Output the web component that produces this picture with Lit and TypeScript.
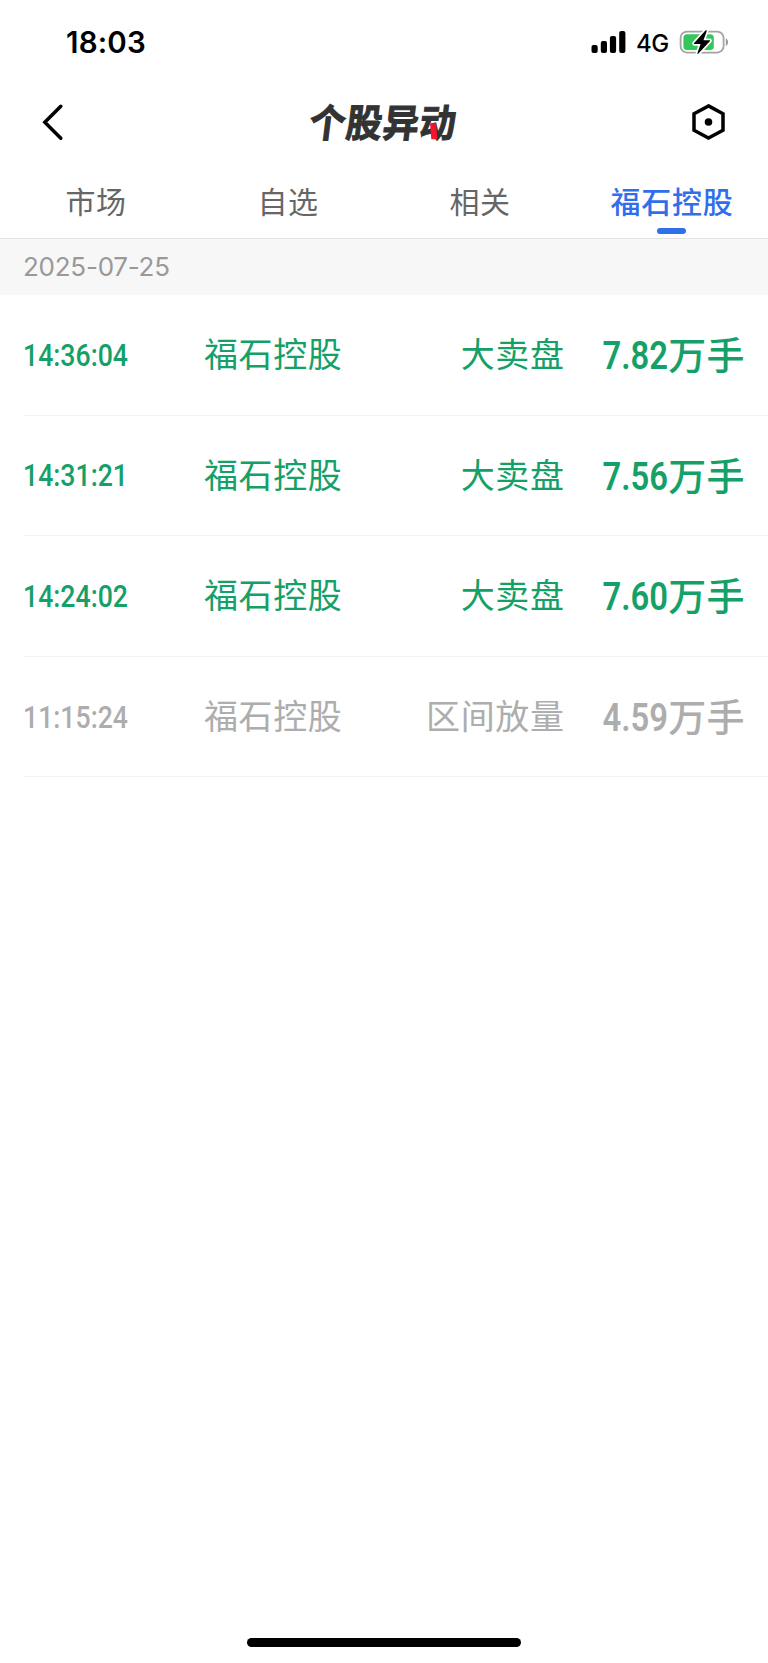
import { LitElement, html, css } from "lit";
import { customElement, property } from "lit/decorators.js";

interface Movement {
  time: string;
  name: string;
  kind: string;
  amount: string;
  unit: string;
  muted?: boolean;
}

const MOVEMENTS: Movement[] = [
  { time: "14:36:04", name: "福石控股", kind: "大卖盘", amount: "7.82", unit: "万手" },
  { time: "14:31:21", name: "福石控股", kind: "大卖盘", amount: "7.56", unit: "万手" },
  { time: "14:24:02", name: "福石控股", kind: "大卖盘", amount: "7.60", unit: "万手" },
  { time: "11:15:24", name: "福石控股", kind: "区间放量", amount: "4.59", unit: "万手", muted: true },
];

@customElement("status-bar")
class StatusBar extends LitElement {
  static styles = css`
    :host {
      display: flex;
      justify-content: space-between;
      height: 85px;
      padding: 0 38px 0 66px;
      box-sizing: border-box;
      font-family: Inter, sans-serif;
      color: #000;
    }
    .clock {
      font-size: 29.5px;
      font-weight: 600;
      line-height: 36px;
      padding-top: 24px;
      letter-spacing: 0.2px;
    }
    .right {
      display: flex;
      align-items: flex-start;
      padding-top: 29px;
    }
    .net {
      font-size: 24px;
      font-weight: 450;
      line-height: 28px;
      padding: 1px 0 0 10px;
      width: 33px;
      letter-spacing: -0.5px;
      margin-right: 10px;
    }
    svg {
      display: block;
    }
  `;
  render() {
    return html`
      <div class="clock">18:03</div>
      <div class="right">
        <svg width="35" height="26" viewBox="0 0 35 26">
          <rect x="0.5" y="16" width="6.2" height="8" rx="2" />
          <rect x="9.8" y="12" width="6.2" height="12" rx="2" />
          <rect x="18.9" y="7" width="6.2" height="17" rx="2" />
          <rect x="28.2" y="2" width="6.2" height="22" rx="2" />
        </svg>
        <span class="net">4G</span>
        <svg width="51" height="26" viewBox="0 0 51 26">
          <rect x="1.6" y="2.6" width="43" height="21" rx="6.4" fill="none" stroke="#a3a3a3" stroke-width="1.8" />
          <path d="M46.8 9.2c3 1.600 3 6.200 0 7.800z" fill="#999" />
          <rect x="4.4" y="5.3" width="30.4" height="15.8" rx="3.6" fill="#34c759" />
          <path
            d="M26.400 1.600 15 14.200c-.3.400 0 .8.400.8h6.200l-3.200 8.900c-.3.900.5 1.200 1.100.6L31 12c.3-.4.1-.8-.4-.8h-6.100l3.200-8.900c.2-.9-.7-1.300-1.300-.7z"
            fill="#000" stroke="#fff" stroke-width="3.4" paint-order="stroke"
          />
        </svg>
      </div>
    `;
  }
}

@customElement("nav-header")
class NavHeader extends LitElement {
  static styles = css`
    :host {
      display: grid;
      grid-template-columns: 1fr auto 1fr;
      align-items: center;
      height: 73px;
      padding: 0 42px 2px;
    }
    svg {
      display: block;
    }
    .end {
      justify-self: end;
    }
    .logo {
      position: relative;
      margin: 0;
      font: 700 36px/50px "Noto Sans CJK SC", sans-serif;
      letter-spacing: 0.8px;
      color: #333;
      -webkit-text-stroke: 1px #333;
      transform: translateY(-2px) skewX(-7deg) scaleY(1.07);
    }
    .accent {
      position: absolute;
      left: 122px;
      top: 28px;
      width: 6px;
      height: 14.5px;
      background: #f5142d;
      transform: skewX(12deg);
    }
  `;
  render() {
    return html`
      <svg width="22" height="38" viewBox="0 0 22 38">
        <path d="M18.800 3.300 2.800 19.300 18.800 35.300" fill="none" stroke="#000" stroke-width="3.500" stroke-linecap="round" />
      </svg>
      <h1 class="logo">个股异动<i class="accent"></i></h1>
      <svg class="end" width="35" height="38" viewBox="0 0 35 38">
        <path d="M17.500 2.900 32 10.800v16.400L17.500 35.100 3 27.200V10.800z" fill="none" stroke="#000" stroke-width="3.500" />
        <circle cx="17.500" cy="19" r="3.800" />
      </svg>
    `;
  }
}

@customElement("tab-strip")
class TabStrip extends LitElement {
  static styles = css`
    :host {
      display: grid;
      grid-template-columns: repeat(4, 1fr);
      height: 78px;
      border-bottom: 1px solid #e3e3e3;
      font-family: "Noto Sans CJK SC", sans-serif;
    }
    .tab {
      display: flex;
      flex-direction: column;
      align-items: center;
      padding-top: 18px;
      font-size: 30px;
      line-height: 44px;
      letter-spacing: 0.4px;
      color: #666;
    }
    .active {
      font-weight: 500;
      letter-spacing: 0.8px;
      color: #316eeb;
    }
    .active::after {
      content: "";
      width: 29px;
      height: 6px;
      margin: 6px 1px 0 0;
      border-radius: 3px;
      background: #316eeb;
    }
  `;
  render() {
    return html`
      <span class="tab">市场</span>
      <span class="tab">自选</span>
      <span class="tab">相关</span>
      <span class="tab active">福石控股</span>
    `;
  }
}

@customElement("movement-row")
class MovementRow extends LitElement {
  @property({ attribute: false }) item!: Movement;
  static styles = css`
    :host {
      display: block;
      padding-left: 22.5px;
    }
    .row {
      display: grid;
      grid-template-columns: 181.5px 1fr auto 180.5px;
      align-items: center;
      height: 120.6px;
      padding: 0 23px 3px 0;
      box-sizing: border-box;
      border-bottom: 1.500px solid #f3f3f3;
      color: #15a068;
      font: 400 34px/50px "Noto Sans CJK SC", sans-serif;
      letter-spacing: 0.600px;
      white-space: nowrap;
    }
    .muted {
      color: #adadad;
    }
    .time {
      font: 500 31px/50px Roboto, sans-serif;
      letter-spacing: 0;
      padding-top: 5px;
      transform: scaleX(0.86);
      transform-origin: left;
    }
    .value {
      display: flex;
      justify-content: flex-end;
      font-size: 38px;
      font-weight: 500;
      letter-spacing: 0.400px;
    }
    .amount {
      font: 600 39.500px/50px Roboto, sans-serif;
      letter-spacing: 0;
      padding-top: 3px;
      margin-bottom: -3px;
      transform: scaleX(0.83);
      transform-origin: right;
    }
  `;
  render() {
    const m = this.item;
    return html`
      <div class="row ${m.muted ? "muted" : ""}">
        <span class="time">${m.time}</span>
        <span>${m.name}</span>
        <span>${m.kind}</span>
        <span class="value"><span class="amount">${m.amount}</span><span>${m.unit}</span></span>
      </div>
    `;
  }
}

@customElement("app-root")
class AppRoot extends LitElement {
  static styles = css`
    :host {
      display: flex;
      flex-direction: column;
      height: 1663px;
      background: #fff;
      overflow: hidden;
    }
    .date {
      height: 56px;
      padding-left: 23px;
      background: #f7f7f7;
      color: #999;
      font: 400 26px/56px Inter, sans-serif;
      letter-spacing: -0.25px;
      flex: none;
    }
    .list {
      flex: 1;
    }
    .home {
      align-self: center;
      width: 274px;
      height: 9px;
      margin-bottom: 16px;
      border-radius: 5px;
      background: #000;
    }
  `;
  render() {
    return html`
      <status-bar></status-bar>
      <nav-header></nav-header>
      <tab-strip></tab-strip>
      <div class="date">2025-07-25</div>
      <div class="list">${MOVEMENTS.map((m) => html`<movement-row .item=${m}></movement-row>`)}</div>
      <div class="home"></div>
    `;
  }
}
